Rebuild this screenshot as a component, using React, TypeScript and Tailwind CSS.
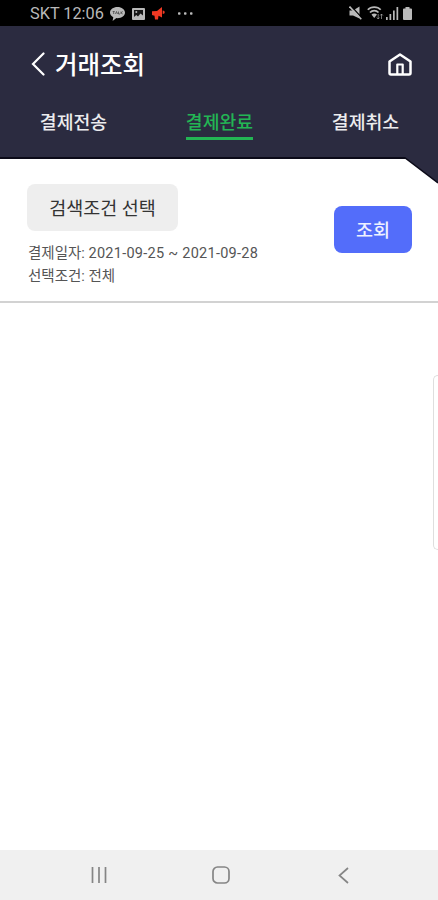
import { clsx } from 'clsx';

const TABS = [
  { id: 'sent', label: '결제전송' },
  { id: 'done', label: '결제완료' },
  { id: 'cancelled', label: '결제취소' },
];

function StatusBar() {
  return (
    <div className="flex h-[26px] shrink-0 items-center justify-between bg-black pl-[30px] pr-[26px] text-[#b9b9b9]">
      <div className="flex items-center pt-px">
        <span className="w-[74px] whitespace-nowrap pt-px text-[16.3px] leading-[22px]">SKT 12:06</span>
        <svg className="ml-[6px]" width="15" height="14" viewBox="0 0 15 14">
          <path d="M7.5 0C3.3 0 0 2.4 0 5.6c0 2 1.3 3.7 3.3 4.7L2.6 14l3.800-2.900 1.100.1c4.200 0 7.500-2.500 7.500-5.600S11.700 0 7.500 0Z" fill="currentColor" />
          <path d="M2.700 4.500h2M3.700 4.500V7M5.500 7l1-2.500 1 2.500M8.500 4.500V7H10M11 4.500V7M12.700 4.500l-1.500 1.300L12.700 7" stroke="#444" strokeWidth=".8" fill="none" />
        </svg>
        <svg className="ml-[7px]" width="13" height="12" viewBox="0 0 13 12">
          <rect width="13" height="12" rx="1" fill="currentColor" />
          <path d="M2 2h9v5.500L8.500 5.500 6 8.500 4.300 7 2 9Z" fill="#161616" />
          <circle cx="4.300" cy="4" r="1" fill="currentColor" />
        </svg>
        <svg className="ml-[7px]" width="14" height="13" viewBox="0 0 14 13" fill="#ef3923">
          <path d="M10 0v10.500L6.500 8.800 6 12.500H3L2.500 8.800 0 8V4.300L5 4Z" />
          <path d="M10.700 3.500c2.600 0 2.700 3.500 0 3.500Z" />
        </svg>
        <svg className="ml-[12px]" width="15" height="3" viewBox="0 0 15 3" fill="currentColor">
          <rect y=".3" width="2.500" height="2.400" rx=".7" />
          <rect x="6" y=".3" width="2.500" height="2.400" rx=".7" />
          <rect x="12" y=".3" width="2.500" height="2.400" rx=".7" />
        </svg>
      </div>
      <div className="flex items-center">
        <svg width="13" height="14" viewBox="0 0 13 14">
          <path d="M.5 4.500H4l6.500-4v12L4 9.500H.5Z" fill="currentColor" />
          <path d="M2 0 13 12" stroke="#000" strokeWidth="1.300" />
          <path d="M.5.500 12.300 13.300" stroke="currentColor" strokeWidth="1.600" />
        </svg>
        <svg className="ml-[5px]" width="17" height="14" viewBox="0 0 17 14" fill="none" stroke="currentColor" strokeWidth="1.700">
          <path d="M.8 3.800C4 .2 10.500.2 13.700 3.800M3 6.500c2.300-2.500 6.200-2.500 8.500 0" />
          <path d="M4.500 8.500c1.500-1.500 4-1.500 5.500 0L7.200 12Z" fill="currentColor" stroke="none" />
          <path d="M11.200 8v5M9.800 11.500l1.400 1.500 1.400-1.500M14.500 13V8M13.200 9.500 14.500 8l1.400 1.500" strokeWidth=".9" opacity=".7" />
        </svg>
        <svg className="ml-[2px]" width="13" height="13" viewBox="0 0 13 13" fill="currentColor">
          <rect x="0" y="10" width="1.700" height="3" />
          <rect x="3.500" y="7" width="1.700" height="6" />
          <rect x="7" y="3.500" width="1.700" height="9.500" />
          <rect x="10.500" y="0" width="1.700" height="13" />
        </svg>
        <svg className="ml-[4px]" width="9" height="13" viewBox="0 0 9 13" fill="currentColor">
          <path d="M2.500 0h4v1.500H8q1 0 1 1V12q0 1-1 1H1q-1 0-1-1V2.500q0-1 1-1h1.500Z" />
        </svg>
      </div>
    </div>
  );
}

function Header({ active }: { active: string }) {
  return (
    <header className="relative flex h-[133px] shrink-0 flex-col border-b-2 border-[#0b0a18] bg-[#2b2b40]">
      <div className="flex h-[76px] items-center justify-between pl-[31px] pr-[26px]">
        <div className="flex items-center">
          <svg width="15" height="24" viewBox="0 0 15 24" fill="none" stroke="#fff" strokeWidth="2.200" strokeLinecap="round">
            <path d="M12.500 1.500 2 12l10.500 10.500" />
          </svg>
          <h1 className="ml-[9px] pt-[3px] text-[24.500px] font-medium leading-[30px] text-white">거래조회</h1>
        </div>
        <svg width="24" height="23" viewBox="0 0 24 23" fill="none" stroke="#fff" strokeWidth="2.500" strokeLinejoin="round">
          <path d="M1.500 8.500 12 1.500l10.500 7V20q0 1.500-1.500 1.500H3Q1.500 21.500 1.500 20Z" />
          <path d="M9.300 21v-9.500h5.400V21" strokeWidth="2.200" />
        </svg>
      </div>
      <nav className="flex justify-between pl-[39px] pr-[38px]">
        {TABS.map((tab) => (
          <button
            key={tab.id}
            className={clsx(
              'flex h-[38px] w-[69px] justify-center whitespace-nowrap pt-[9px] text-[18.300px] font-medium leading-6',
              tab.id === active ? 'text-[#23b554]' : 'text-[#ececee]',
            )}
          >
            <span className={clsx('h-[29px] border-b-[3px]', tab.id === active ? 'border-[#23b554]' : 'border-transparent')}>
              {tab.label}
            </span>
          </button>
        ))}
      </nav>
      <svg className="absolute right-0 top-[131px]" width="35" height="28" viewBox="0 0 35 28">
        <path d="M0 0h35v26L1 0Z" fill="#2b2b40" />
        <path d="M0 .5h1.500L35 26" fill="none" stroke="#0b0a18" strokeWidth="1.500" />
      </svg>
    </header>
  );
}

function SearchPanel() {
  return (
    <section className="flex h-[144px] shrink-0 justify-between border-b-2 border-[#d2d2d2] pl-[27px] pr-[26px]">
      <div className="flex flex-col items-start pt-[25px]">
        <button className="h-[47px] w-[151px] whitespace-nowrap rounded-lg bg-[#eeeeee] pt-[5px] text-[18.500px] text-[#333]">
          검색조건 선택
        </button>
        <div className="mt-[12px] whitespace-nowrap pl-px text-[14.500px] leading-[22.500px] text-[#555]">
          <p>
            결제일자: <span className="tracking-[0.270px]">2021-09-25 ~ 2021-09-28</span>
          </p>
          <p>선택조건: 전체</p>
        </div>
      </div>
      <button className="mt-[47px] h-[47px] w-[78px] rounded-lg bg-[#536dfa] pt-[4px] text-[18.500px] font-medium text-[#eef1ff]">
        조회
      </button>
    </section>
  );
}

function NavigationBar() {
  return (
    <div className="flex h-[50px] shrink-0 items-center justify-between bg-[#f0f0f0] pl-[91px] pr-[89px] text-[#858585]">
      <svg width="16" height="16" viewBox="0 0 16 16" stroke="currentColor" strokeWidth="1.700">
        <path d="M1.500 0v16M8 0v16M14.500 0v16" />
      </svg>
      <svg className="-ml-[3px]" width="18" height="18" viewBox="0 0 18 18" fill="none" stroke="currentColor" strokeWidth="1.700">
        <rect x="1" y="1" width="16" height="16" rx="4.500" />
      </svg>
      <svg width="11" height="17" viewBox="0 0 11 17" fill="none" stroke="currentColor" strokeWidth="1.700">
        <path d="M10 1 1.500 8.500 10 16" />
      </svg>
    </div>
  );
}

export default function App() {
  return (
    <div className="flex h-[900px] w-full flex-col overflow-hidden bg-white font-[Roboto,'Noto_Sans_CJK_KR',sans-serif]">
      <StatusBar />
      <Header active="done" />
      <SearchPanel />
      <main className="flex flex-1 justify-end overflow-hidden pt-[72px]">
        <div className="h-[175px] w-[5px] rounded-l-lg border border-r-0 border-[#dedede]" />
      </main>
      <NavigationBar />
    </div>
  );
}
